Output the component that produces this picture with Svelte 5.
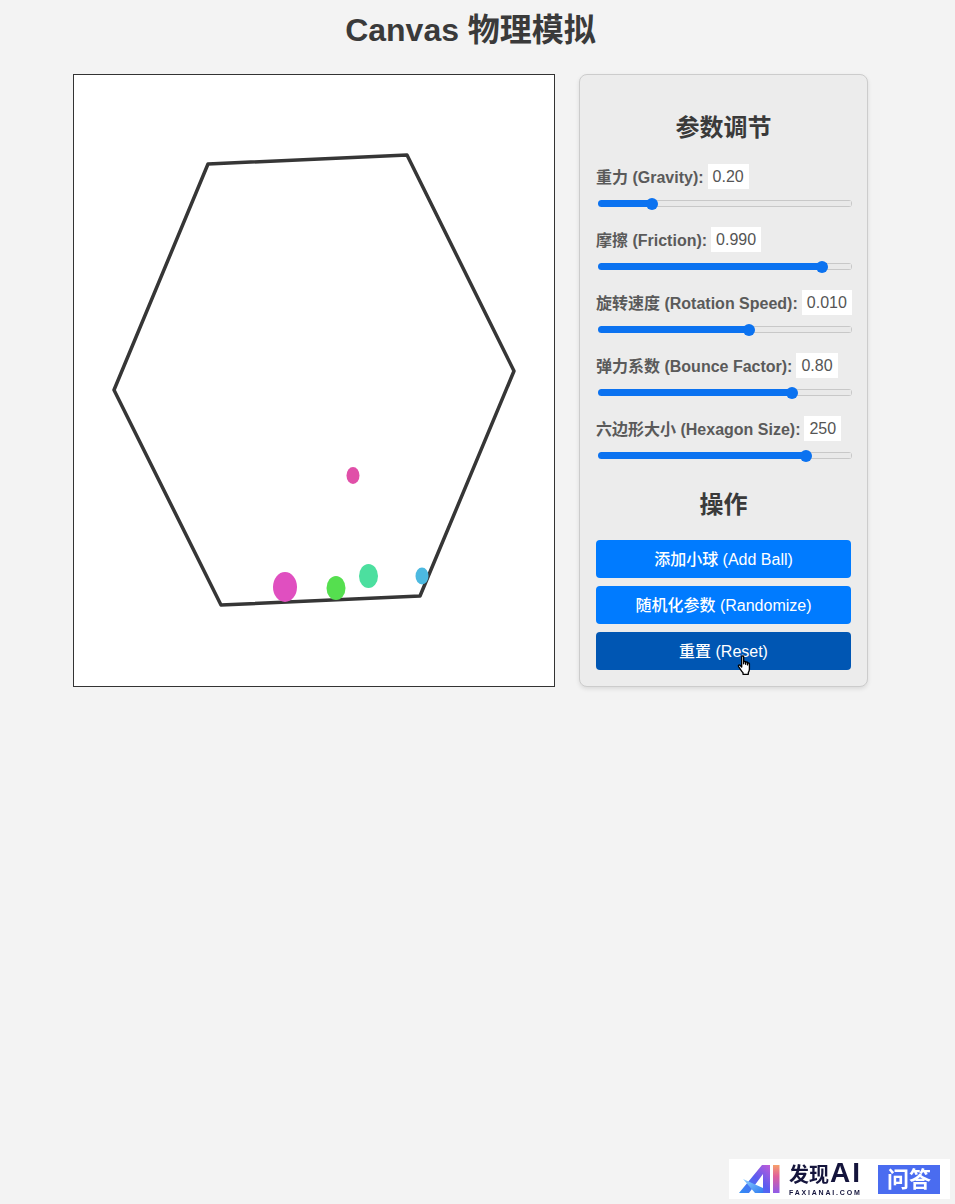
<script>
  let params = [
    { label: "重力 (Gravity):", min: 0, max: 1, step: 0.01, value: 0.2, digits: 2 },
    { label: "摩擦 (Friction):", min: 0.9, max: 1, step: 0.001, value: 0.99, digits: 3 },
    { label: "旋转速度 (Rotation Speed):", min: -0.02, max: 0.03, step: 0.001, value: 0.01, digits: 3 },
    { label: "弹力系数 (Bounce Factor):", min: 0.1, max: 1, step: 0.01, value: 0.8, digits: 2 },
    { label: "六边形大小 (Hexagon Size):", min: 100, max: 280, step: 1, value: 250, digits: 0 },
  ];

  const hexagon = "134,89 333,80 440,296 346,521 147,530 40,315";

  const balls = [
    { x: 211, y: 512, rx: 12, ry: 15, color: "#e04fc0" },
    { x: 262, y: 513, rx: 9.5, ry: 12, color: "#55df4f" },
    { x: 294.5, y: 501, rx: 9.5, ry: 12, color: "#4cdf9f" },
    { x: 348, y: 501, rx: 6.5, ry: 8.5, color: "#4cb9e0" },
    { x: 279, y: 400.5, rx: 6.5, ry: 8.5, color: "#e04fa8" },
  ];

  function fill(p) {
    return ((p.value - p.min) / (p.max - p.min)) * 100;
  }
</script>

<main class="page">
  <h1>Canvas 物理模拟</h1>
  <div class="content">
    <div class="stage">
      <svg viewBox="0 0 480 611" width="480" height="611">
        <polygon points={hexagon} class="hex" />
        {#each balls as b}
          <ellipse cx={b.x} cy={b.y} rx={b.rx} ry={b.ry} fill={b.color} />
        {/each}
      </svg>
    </div>

    <section class="panel">
      <h3 class="first">参数调节</h3>
      {#each params as p}
        <div class="control">
          <div class="row">
            <span class="name">{p.label}</span>
            <span class="value">{p.value.toFixed(p.digits)}</span>
          </div>
          <input
            type="range"
            min={p.min}
            max={p.max}
            step={p.step}
            bind:value={p.value}
            style="--fill: {fill(p)}%"
          />
        </div>
      {/each}

      <h3 class="second">操作</h3>
      <button>添加小球 (Add Ball)</button>
      <button>随机化参数 (Randomize)</button>
      <button class="hover">
        重置 (Reset)
        <svg class="cursor" viewBox="0 0 14 19" width="16" height="21">
          <path
            d="M4 1.500c0-1 1.800-1 1.800 0V8V6.600c0-1 1.800-1 1.800 0V8.400V7.100c0-1 1.700-1 1.700 0V9V7.900c0-1 1.700-.9 1.700.1v4.600c0 1.500-.4 2.400-1 3.400v1.500H5.200V16C4 15 2.900 12.800 1.200 10.600c-.7-1 .4-2 1.300-1.300L4 10.800z"
            fill="#fff"
            stroke="#000"
            stroke-width="1.200"
            stroke-linejoin="round"
          />
        </svg>
      </button>
    </section>
  </div>
</main>

<div class="brand">
  <svg class="mark" viewBox="0 0 41 30" width="41" height="30">
    <defs>
      <linearGradient id="leg" x1="0" y1="1" x2="1" y2="0">
        <stop offset="0" stop-color="#2f8ff5" />
        <stop offset="0.55" stop-color="#5b5cf0" />
        <stop offset="1" stop-color="#c05bd8" />
      </linearGradient>
      <linearGradient id="bar" x1="0" y1="1" x2="0" y2="0">
        <stop offset="0" stop-color="#8f5be8" />
        <stop offset="0.6" stop-color="#e0609a" />
        <stop offset="1" stop-color="#f7a06a" />
      </linearGradient>
      <linearGradient id="swoosh" x1="0" y1="0" x2="1" y2="1">
        <stop offset="0" stop-color="#8fd0ff" />
        <stop offset="1" stop-color="#2f7cf0" />
      </linearGradient>
    </defs>
    <polygon points="0,29 10,29 24,10 24,29 31,29 31,1 23,1" fill="url(#leg)" />
    <polygon points="4,15 24,24 24,29 16,29" fill="url(#swoosh)" />
    <rect x="34" y="1" width="6.500" height="28" fill="url(#bar)" />
  </svg>
  <div class="brand-text">
    <span class="brand-name">发现<span class="brand-ai">AI</span></span>
    <span class="brand-url">FAXIANAI.COM</span>
  </div>
  <span class="brand-tag">问答</span>
</div>

<style>
  :global(body) {
    margin: 0;
    background: #f3f3f3;
    font-family: "Liberation Sans", "Noto Sans CJK SC", sans-serif;
  }

  .page {
    width: 941px;
    height: 1204px;
    display: flex;
    flex-direction: column;
    align-items: center;
    color: #333;
  }

  h1 {
    margin: 10px 0 0;
    height: 40px;
    font-size: 32px;
    line-height: 40px;
    font-weight: 600;
    color: #3a3a3a;
  }

  .content {
    display: flex;
    gap: 24px;
    margin-top: 24px;
  }

  .stage {
    width: 480px;
    height: 611px;
    background: #fff;
    border: 1px solid #333;
  }

  .stage svg {
    display: block;
  }

  .hex {
    fill: none;
    stroke: #363636;
    stroke-width: 3.500;
    stroke-linejoin: round;
  }

  .panel {
    width: 255px;
    padding: 0 16px;
    background: #ececec;
    border: 1px solid #ccc;
    border-radius: 8px;
    box-shadow: 0 2px 4px rgba(0, 0, 0, 0.1);
    display: flex;
    flex-direction: column;
  }

  h3 {
    margin: 0 0 21px;
    text-align: center;
    font-size: 24px;
    line-height: 28px;
    font-weight: 600;
    color: #3a3a3a;
  }

  h3.first {
    margin-top: 39px;
  }

  h3.second {
    margin-top: 13px;
  }

  .control {
    height: 63px;
  }

  .row {
    display: flex;
    align-items: center;
    gap: 4px;
    height: 26px;
  }

  .name {
    font-size: 16px;
    font-weight: 600;
    color: #5a5a5a;
    white-space: nowrap;
  }

  .value {
    padding: 0 5px;
    line-height: 25px;
    font-size: 16px;
    background: #fff;
    color: #555;
  }

  input[type="range"] {
    -webkit-appearance: none;
    appearance: none;
    display: block;
    width: 254px;
    height: 7px;
    margin: 11px 0 0 2px;
    background: transparent;
  }

  input[type="range"]::-webkit-slider-runnable-track {
    height: 7px;
    border-radius: 4px;
    background:
      linear-gradient(to right, #0b72f0 var(--fill), transparent var(--fill)),
      linear-gradient(to left, #c8c8c8 1px, transparent 1px),
      linear-gradient(#c8c8c8 1px, #e9e9e9 1px, #e9e9e9 6px, #c8c8c8 6px);
  }

  input[type="range"]::-webkit-slider-thumb {
    -webkit-appearance: none;
    width: 12px;
    height: 12px;
    margin-top: -2.500px;
    border-radius: 50%;
    background: #0b72f0;
  }

  button {
    position: relative;
    height: 38px;
    margin: 0 0 8px;
    padding: 0 0 2px;
    border: 0;
    border-radius: 4px;
    background: #007bff;
    color: #fff;
    font-family: inherit;
    font-size: 16px;
    font-weight: 500;
  }

  button.hover {
    background: #0056b3;
    margin-bottom: 0;
  }

  .cursor {
    position: absolute;
    left: 141px;
    top: 23px;
  }

  .brand {
    position: fixed;
    right: 5px;
    bottom: 5px;
    width: 221px;
    height: 40px;
    background: #fff;
    display: flex;
    align-items: center;
    box-sizing: border-box;
    padding-left: 10px;
  }

  .mark {
    flex: none;
  }

  .brand-text {
    display: flex;
    flex-direction: column;
    margin-left: 9px;
    color: #14143c;
    width: 74px;
  }

  .brand-name {
    font-size: 20px;
    line-height: 24px;
    font-weight: 700;
    white-space: nowrap;
  }

  .brand-ai {
    font-size: 28px;
    letter-spacing: 2px;
    margin-left: 1px;
    font-weight: 700;
  }

  .brand-url {
    margin-top: 2px;
    font-size: 7px;
    line-height: 8px;
    letter-spacing: 1.800px;
    font-weight: 700;
    white-space: nowrap;
  }

  .brand-tag {
    margin-left: 15px;
    width: 62px;
    height: 29px;
    background: #4a6cf0;
    color: #fff;
    font-size: 22px;
    line-height: 29px;
    font-weight: 700;
    text-align: center;
  }
</style>
